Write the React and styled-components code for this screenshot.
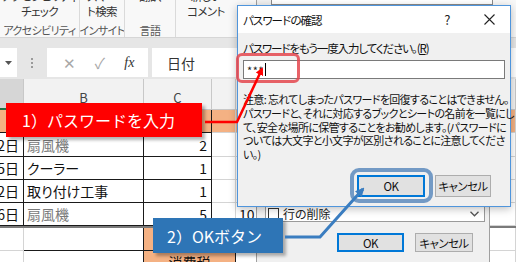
import React from 'react';
import styled, { createGlobalStyle, css } from 'styled-components';

const JP = `"Noto Sans CJK JP", "Noto Sans", sans-serif`;

const GlobalStyle = createGlobalStyle`
  html, body { margin: 0; padding: 0; background: #fff; }
  body { font-family: ${JP}; }
`;

const Screen = styled('div')`
  position: relative;
  width: 516px;
  height: 262px;
  overflow: hidden;
  background: #fff;
  font-family: ${JP};
  font-feature-settings: "palt";
`;

/* ---------- ribbon ---------- */
const Ribbon = styled('div')`
  display: flex;
  height: 37px;
  background: #f8f8f8;
  border-bottom: 1px solid #d6d6d6;
  overflow: hidden;
`;
const RibbonGroup = styled('div')`
  flex: 0 0 ${(p) => p.w}px;
  display: flex;
  flex-direction: column;
  align-items: center;
  border-right: 1px solid #dadada;
  box-sizing: border-box;
  overflow: hidden;
  ${(p) => p.last && css`border-right: none;`}
`;
const RibbonButton = styled('div')`
  margin-top: -11px;
  font-size: 11.5px;
  line-height: 15px;
  letter-spacing: -0.6px;
  color: #333;
  text-align: center;
  white-space: nowrap;
`;
const RibbonLabel = styled('div')`
  margin-top: auto;
  font-size: 11px;
  line-height: 13px;
  letter-spacing: -0.6px;
  color: #555;
  white-space: nowrap;
`;

/* ---------- formula bar ---------- */
const FormulaStrip = styled('div')`
  display: flex;
  align-items: stretch;
  height: 29px;
  padding: 10px 0 2px;
  background: #e6e6e6;
`;
const NameBox = styled('div')`
  flex: 0 0 17px;
  background: #fff;
  display: flex;
  align-items: center;
  padding-left: 5px;
  box-sizing: border-box;
`;
const Grip = styled('div')`
  flex: 0 0 30px;
  display: flex;
  flex-direction: column;
  align-items: center;
  justify-content: center;
  gap: 2px;
  & > span { width: 2px; height: 2px; background: #9a9a9a; }
`;
const FxBox = styled('div')`
  flex: 0 0 101px;
  background: #fff;
  display: flex;
  align-items: center;
  justify-content: space-around;
  padding: 0 4px 0 6px;
  box-sizing: border-box;
`;
const FxIcon = styled('span')`
  font-size: ${(p) => p.size || 14}px;
  color: ${(p) => p.color || '#a8a8a8'};
  font-family: ${(p) => (p.serif ? '"Liberation Serif", serif' : JP)};
  font-style: ${(p) => (p.serif ? 'italic' : 'normal')};
`;
const FormulaInput = styled('div')`
  flex: 1;
  margin-left: 4px;
  background: #fff;
  display: flex;
  align-items: center;
  padding-left: 15px;
  font-size: 14px;
  color: #333;
`;

/* ---------- sheet ---------- */
const COLS = '24px 120px 68px 24px 1fr';

const HeaderRow = styled('div')`
  display: grid;
  grid-template-columns: ${COLS};
  height: 31px;
  background: #f2f2f2;
`;
const HeaderCell = styled('div')`
  display: flex;
  align-items: flex-end;
  justify-content: center;
  padding-bottom: 2px;
  box-sizing: border-box;
  border-right: 1px solid #c8c8c8;
  border-bottom: 1px solid #c8c8c8;
  font-size: 13px;
  color: #444;
  ${(p) => p.selected && css`
    background: #d6d6d6;
    border-bottom: 2px solid #217346;
  `}
`;
const Row = styled('div')`
  display: grid;
  grid-template-columns: ${COLS};
  height: ${(p) => p.h}px;
  ${(p) => p.thick && css`border-top: 2px solid #7a7a7a;`}
`;
const Cell = styled('div')`
  display: flex;
  align-items: center;
  justify-content: ${(p) => (p.right ? 'flex-end' : 'flex-start')};
  padding: 0 ${(p) => (p.right ? 4 : 3)}px;
  box-sizing: border-box;
  overflow: hidden;
  white-space: nowrap;
  font-size: 14px;
  color: ${(p) => (p.muted ? '#7a7a7a' : '#111')};
  background: ${(p) => (p.peach ? '#f4b183' : '#fff')};
  border-right: 1px solid ${(p) => (p.table ? '#1a1a1a' : '#d4d4d4')};
  border-bottom: 1px solid ${(p) => (p.table ? '#1a1a1a' : '#d4d4d4')};
  ${(p) => p.span && css`grid-column: span ${p.span}; justify-content: center;`}
`;

/* ---------- back dialog ---------- */
const BackDialog = styled('div')`
  position: absolute;
  left: 256px;
  top: 0;
  width: 234px;
  height: 262px;
  background: #f0f0f0;
  border-left: 1px solid #a0a0a0;
  border-right: 1px solid #a0a0a0;
  box-sizing: border-box;
  display: flex;
  flex-direction: column;
  padding: 0 0 10px 8px;
`;
const BackTopField = styled('div')`
  margin: -14px 0 auto 6px;
  width: 220px;
  height: 17px;
  background: #fff;
  border: 1px solid #8a8a8a;
`;
const DropField = styled('div')`
  width: 220px;
  height: 17px;
  box-sizing: border-box;
  background: #fff;
  border: 1px solid #9a9a9a;
  display: flex;
  align-items: center;
  gap: 4px;
  padding: 0 5px 0 2px;
  font-size: 12px;
  color: #222;
`;
const CheckBox = styled('span')`
  width: 11px;
  height: 11px;
  border: 1px solid #333;
  background: #fff;
  box-sizing: border-box;
`;
const Chevron = styled('svg')`
  margin-left: auto;
`;
const ButtonRow = styled('div')`
  display: flex;
  justify-content: flex-end;
  gap: ${(p) => p.gap}px;
  margin-top: ${(p) => p.mt}px;
  padding-right: ${(p) => p.pr}px;
`;
const Button = styled('button')`
  width: ${(p) => p.w}px;
  height: ${(p) => p.h}px;
  padding: 0;
  margin: 0;
  background: #e1e1e1;
  border: 1px solid ${(p) => (p.primary ? '#0078d7' : '#adadad')};
  ${(p) => p.primary && css`box-shadow: inset 0 0 0 1px #0078d7;`}
  font-family: ${JP};
  font-feature-settings: "palt";
  font-size: 11.5px;
  letter-spacing: -0.6px;
  white-space: nowrap;
  color: #111;
`;

/* ---------- front dialog ---------- */
const Dialog = styled('div')`
  position: absolute;
  left: 237px;
  top: 5px;
  width: 274px;
  height: 202px;
  box-sizing: border-box;
  border: 1px solid #4f95dc;
  background: #f0f0f0;
  box-shadow: 0 2px 8px rgba(0, 0, 0, 0.25);
  display: flex;
  flex-direction: column;
`;
const TitleBar = styled('div')`
  height: 27px;
  background: #fff;
  display: flex;
  align-items: center;
  padding-left: 5px;
  font-size: 11.5px;
  letter-spacing: -0.9px;
  color: #111;
`;
const TitleButtons = styled('div')`
  margin-left: auto;
  display: flex;
  align-items: center;
`;
const TitleButton = styled('span')`
  width: 42px;
  display: flex;
  justify-content: center;
  font-size: 13px;
  color: #222;
`;
const Body = styled('div')`
  display: flex;
  flex-direction: column;
  padding: 8px 0 0 5px;
`;
const Label = styled('div')`
  font-size: 11.5px;
  line-height: 14px;
  letter-spacing: -1.1px;
  color: #111;
  white-space: nowrap;
  & u { text-decoration: underline; }
`;
const Input = styled('div')`
  margin-top: 5px;
  width: 262px;
  height: 19px;
  box-sizing: border-box;
  background: #fff;
  border: 1px solid #7a7a7a;
  display: flex;
  align-items: center;
  padding-left: 3px;
  font-size: 11px;
  color: #222;
  letter-spacing: 0.5px;
`;
const Caret = styled('span')`
  width: 1px;
  height: 13px;
  background: #000;
  margin-left: 1px;
`;
const Note = styled('div')`
  margin-top: 14px;
  font-size: 11px;
  line-height: 13.8px;
  letter-spacing: -0.65px;
  color: #111;
  white-space: nowrap;
`;

/* ---------- overlays ---------- */
const Highlight = styled('div')`
  position: absolute;
  left: ${(p) => p.x}px;
  top: ${(p) => p.y}px;
  width: ${(p) => p.w}px;
  height: ${(p) => p.h}px;
  box-sizing: border-box;
  border: ${(p) => p.bw}px solid ${(p) => p.color};
  border-radius: ${(p) => p.r}px;
`;
const Callout = styled('div')`
  position: absolute;
  left: ${(p) => p.x}px;
  top: ${(p) => p.y}px;
  width: ${(p) => p.w}px;
  height: ${(p) => p.h}px;
  background: ${(p) => p.bg};
  box-shadow: 3px 3px 3px rgba(0, 0, 0, 0.3);
  display: flex;
  align-items: center;
  padding-left: ${(p) => p.pl}px;
  box-sizing: border-box;
  color: #fff;
  font-size: 16px;
  font-feature-settings: normal;
  white-space: nowrap;
`;
const ArrowLayer = styled('svg')`
  position: absolute;
  left: 0;
  top: 0;
  pointer-events: none;
`;

const rows = [
  { h: 23, peach: true, cells: ['', '', '', '', ''] },
  { h: 24, cells: ['7月2日', '扇風機', '2'], muted: true },
  { h: 23, cells: ['7月5日', 'クーラー', '1'] },
  { h: 23, cells: ['7月2日', '取り付け工事', '1'] },
  { h: 23, cells: ['7月6日', '扇風機', '5', '', '10,000'], muted: true },
];

export default function App() {
  return (
    <Screen>
      <GlobalStyle />
      <Ribbon>
        <RibbonGroup w={80}>
          <RibbonButton>アクセシビリティ<br />チェック</RibbonButton>
          <RibbonLabel>アクセシビリティ</RibbonLabel>
        </RibbonGroup>
        <RibbonGroup w={45}>
          <RibbonButton>スマー<br />ト検索</RibbonButton>
          <RibbonLabel>インサイト</RibbonLabel>
        </RibbonGroup>
        <RibbonGroup w={51}>
          <RibbonButton>翻訳<br />&nbsp;</RibbonButton>
          <RibbonLabel>言語</RibbonLabel>
        </RibbonGroup>
        <RibbonGroup w={60} last>
          <RibbonButton>新しい<br />コメント</RibbonButton>
          <RibbonLabel>&nbsp;</RibbonLabel>
        </RibbonGroup>
      </Ribbon>

      <FormulaStrip>
        <NameBox>
          <svg width="7" height="4" viewBox="0 0 7 4"><path d="M0 0 L7 0 L3.5 4 Z" fill="#555" /></svg>
        </NameBox>
        <Grip><span /><span /><span /></Grip>
        <FxBox>
          <FxIcon size={15}>✕</FxIcon>
          <FxIcon size={15}>✓</FxIcon>
          <FxIcon size={14} color="#333" serif>fx</FxIcon>
        </FxBox>
        <FormulaInput>日付</FormulaInput>
      </FormulaStrip>

      <HeaderRow>
        <HeaderCell selected />
        <HeaderCell>B</HeaderCell>
        <HeaderCell>C</HeaderCell>
        <HeaderCell />
        <HeaderCell />
      </HeaderRow>

      {rows.map((r, i) => (
        <Row key={i} h={r.h}>
          <Cell table peach={r.peach} right>{r.cells[0]}</Cell>
          <Cell table peach={r.peach} muted={r.muted}>{r.cells[1]}</Cell>
          <Cell table peach={r.peach} right>{r.cells[2]}</Cell>
          <Cell peach={r.peach} right>{r.cells[3]}</Cell>
          <Cell peach={r.peach}>{r.cells[4]}</Cell>
        </Row>
      ))}
      <Row h={23} thick>
        <Cell />
        <Cell table />
        <Cell table peach span={2} />
        <Cell />
      </Row>
      <Row h={23}>
        <Cell />
        <Cell table />
        <Cell table peach span={2}>消費税</Cell>
        <Cell />
      </Row>

      <BackDialog>
        <BackTopField />
        <DropField>
          <CheckBox />
          行の削除
          <Chevron width="9" height="6" viewBox="0 0 9 6">
            <path d="M0.5 0.8 L4.5 4.8 L8.5 0.8" fill="none" stroke="#555" strokeWidth="1.3" />
          </Chevron>
        </DropField>
        <ButtonRow gap={11} mt={11} pr={16}>
          <Button primary w={67} h={19}>OK</Button>
          <Button w={58} h={19}>キャンセル</Button>
        </ButtonRow>
      </BackDialog>

      <Dialog>
        <TitleBar>
          パスワードの確認
          <TitleButtons>
            <TitleButton>?</TitleButton>
            <TitleButton>
              <svg width="11" height="11" viewBox="0 0 11 11">
                <path d="M0.5 0.5 L10.5 10.5 M10.5 0.5 L0.5 10.5" stroke="#222" strokeWidth="1.1" />
              </svg>
            </TitleButton>
          </TitleButtons>
        </TitleBar>
        <Body>
          <Label>パスワードをもう一度入力してください。(<u>R</u>)</Label>
          <Input>***<Caret /></Input>
          <Note>
            注意: 忘れてしまったパスワードを回復することはできません。<br />
            パスワードと、それに対応するブックとシートの名前を一覧にし<br />
            て、安全な場所に保管することをお勧めします。(パスワードに<br />
            ついては大文字と小文字が区別されることに注意してくださ<br />
            い。)
          </Note>
          <ButtonRow gap={10} mt={13} pr={19}>
            <Button primary w={68} h={22}>OK</Button>
            <Button w={56} h={22}>キャンセル</Button>
          </ButtonRow>
        </Body>
      </Dialog>

      <Highlight x={236} y={53} w={64} h={30} bw={3} r={6} color="rgba(228, 70, 78, 0.85)" />
      <Highlight x={350} y={168} w={83} h={35} bw={4} r={9} color="rgba(84, 132, 186, 0.8)" />

      <Callout x={6} y={103} w={196} h={34} pl={16} bg="#ff0000">1）パスワードを入力</Callout>
      <Callout x={153} y={218} w={130} h={35} pl={14} bg="#2e75b6">2）OKボタン</Callout>

      <ArrowLayer width="516" height="262" viewBox="0 0 516 262">
        <defs>
          <marker id="headRed" markerWidth="8" markerHeight="8" refX="6" refY="4" orient="auto" markerUnits="userSpaceOnUse">
            <path d="M0 0 L8 4 L0 8 Z" fill="#ff0000" />
          </marker>
          <marker id="headBlue" markerWidth="9" markerHeight="9" refX="7" refY="4.5" orient="auto" markerUnits="userSpaceOnUse">
            <path d="M0 0 L9 4.5 L0 9 Z" fill="#3a7dc0" />
          </marker>
        </defs>
        <polyline points="205,122 237,122 262,69" fill="none" stroke="#ff0000" strokeWidth="2.5" markerEnd="url(#headRed)" />
        <polyline points="285,237 320,237 363,189" fill="none" stroke="#3a7dc0" strokeWidth="3" markerEnd="url(#headBlue)" />
      </ArrowLayer>
    </Screen>
  );
}
